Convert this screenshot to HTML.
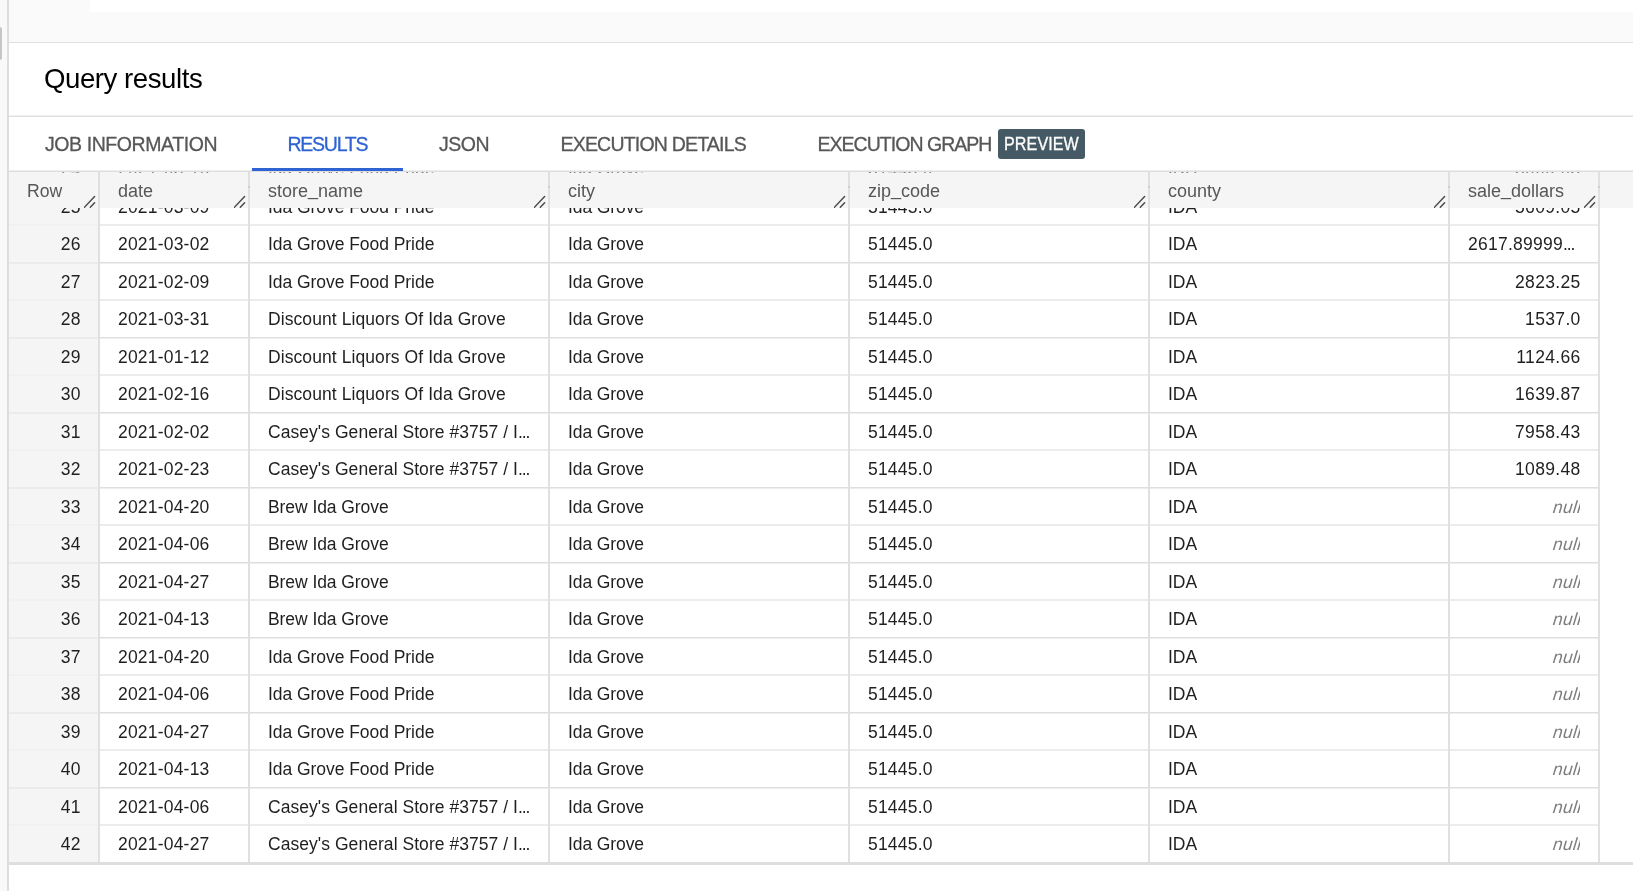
<!DOCTYPE html><html><head><meta charset="utf-8"><title>Query results</title><style>
*{box-sizing:border-box}
html,body{margin:0;padding:0}
body{width:1633px;height:891px;overflow:hidden;position:relative;background:#fff;font-family:"Liberation Sans",sans-serif;color:#202124}
.a{position:absolute}
#wrap{position:absolute;left:0;top:0;width:1633px;height:891px;will-change:transform}
.t{position:absolute;white-space:nowrap;line-height:20px;font-size:17.5px;color:#1f1f1f}
.n{letter-spacing:0.2px}
.r{text-align:right}
.tab{position:absolute;white-space:nowrap;line-height:20px;font-size:19.5px;color:#575757;top:134px;-webkit-text-stroke:0.3px currentColor}
.hd{position:absolute;white-space:nowrap;line-height:20px;font-size:18px;color:#575757;top:181px}
.vl{position:absolute;width:2px;background:#e0e0e0}
.hl{position:absolute;height:2px;background:#ebebeb}
.nul{font-style:italic;color:#7d7d7d;letter-spacing:0.3px;transform:skewX(-6deg);transform-origin:0 16px}
.rz{position:absolute;width:14px;height:14px}
.el{letter-spacing:-1.1px}
.us{position:relative;top:-2px}
</style></head><body><div id="wrap">
<div class="a" style="left:0;top:0;width:7px;height:891px;background:#f9f9f9"></div>
<div class="a" style="left:0;top:27px;width:2px;height:33px;background:#c6c6c6;border-radius:0 2px 2px 0"></div>
<div class="a" style="left:7px;top:0;width:2px;height:891px;background:#dedede"></div>
<div class="a" style="left:9px;top:0;width:1624px;height:42px;background:#fafafa"></div>
<div class="a" style="left:90px;top:0;width:1543px;height:12px;background:#fff"></div>
<div class="a" style="left:9px;top:42px;width:1624px;height:1px;background:#e0e0e0"></div>
<div class="a" style="left:44px;top:64px;font-size:27.6px;line-height:30px;color:#000;letter-spacing:-0.45px;white-space:nowrap">Query results</div>
<div class="a" style="left:9px;top:115px;width:1624px;height:1px;background:#efefef"></div>
<div class="a" style="left:9px;top:116px;width:1624px;height:1px;background:#e0e0e0"></div>
<div class="tab" style="left:45px;letter-spacing:-0.42px">JOB INFORMATION</div>
<div class="tab" style="left:287.5px;color:#2f63d3;letter-spacing:-1.25px">RESULTS</div>
<div class="tab" style="left:439px;letter-spacing:-0.45px">JSON</div>
<div class="tab" style="left:560.5px;letter-spacing:-0.8px">EXECUTION DETAILS</div>
<div class="tab" style="left:817.5px;letter-spacing:-0.97px">EXECUTION GRAPH</div>
<div class="a" style="left:998px;top:129px;width:87px;height:30px;background:#455a64;border-radius:3px"></div>
<div class="a" style="left:1004px;top:134px;font-size:17.5px;line-height:20px;color:#fff;-webkit-text-stroke:0.3px #fff;letter-spacing:0.1px;transform:scaleX(0.92);transform-origin:0 0;white-space:nowrap">PREVIEW</div>
<div class="a" style="left:9px;top:170px;width:1624px;height:1px;background:#eeeeee"></div>
<div class="a" style="left:9px;top:171px;width:1624px;height:1px;background:#dedede"></div>
<div class="a" style="left:9px;top:172px;width:1624px;height:36px;background:#f5f5f5"></div>
<div class="a" style="left:252px;top:168px;width:151px;height:3px;background:#2f63d3"></div>
<div class="a" style="left:9px;top:172px;width:89px;height:690px;background:#f5f5f5"></div>
<div class="a" style="left:0;top:172px;width:1633px;height:1px;overflow:hidden;opacity:0.55"><div class="a" style="left:0;top:-172px;width:1633px;height:891px"><div class="t r n" style="left:20px;width:60.7px;top:159.0px">24</div><div class="t n" style="left:118px;top:159.0px">2021-03-16</div><div class="t" style="left:268px;top:159.0px;letter-spacing:-0.05px">Ida Grove Food Pride</div><div class="t" style="left:568px;top:159.0px;letter-spacing:-0.1px">Ida Grove</div><div class="t n" style="left:868px;top:159.0px">51445.0</div><div class="t" style="left:1168px;top:159.0px">IDA</div><div class="t r n" style="left:1460px;width:120.7px;top:159.0px;letter-spacing:0.35px">3009.05</div></div></div>
<div class="a" style="left:0;top:208px;width:1633px;height:654px;overflow:hidden"><div class="a" style="left:0;top:-208px;width:1633px;height:891px"><div class="t r n" style="left:20px;width:60.7px;top:196.5px">25</div><div class="t n" style="left:118px;top:196.5px">2021-03-09</div><div class="t" style="left:268px;top:196.5px;letter-spacing:-0.05px">Ida Grove Food Pride</div><div class="t" style="left:568px;top:196.5px;letter-spacing:-0.1px">Ida Grove</div><div class="t n" style="left:868px;top:196.5px">51445.0</div><div class="t" style="left:1168px;top:196.5px">IDA</div><div class="t r n" style="left:1460px;width:120.7px;top:196.5px;letter-spacing:0.35px">5609.05</div><div class="t r n" style="left:20px;width:60.7px;top:234.0px">26</div><div class="t n" style="left:118px;top:234.0px">2021-03-02</div><div class="t" style="left:268px;top:234.0px;letter-spacing:-0.05px">Ida Grove Food Pride</div><div class="t" style="left:568px;top:234.0px;letter-spacing:-0.1px">Ida Grove</div><div class="t n" style="left:868px;top:234.0px">51445.0</div><div class="t" style="left:1168px;top:234.0px">IDA</div><div class="t" style="left:1468px;top:234.0px;letter-spacing:0.25px">2617.89999<span class="el">...</span></div><div class="t r n" style="left:20px;width:60.7px;top:271.5px">27</div><div class="t n" style="left:118px;top:271.5px">2021-02-09</div><div class="t" style="left:268px;top:271.5px;letter-spacing:-0.05px">Ida Grove Food Pride</div><div class="t" style="left:568px;top:271.5px;letter-spacing:-0.1px">Ida Grove</div><div class="t n" style="left:868px;top:271.5px">51445.0</div><div class="t" style="left:1168px;top:271.5px">IDA</div><div class="t r n" style="left:1460px;width:120.7px;top:271.5px;letter-spacing:0.35px">2823.25</div><div class="t r n" style="left:20px;width:60.7px;top:309.0px">28</div><div class="t n" style="left:118px;top:309.0px">2021-03-31</div><div class="t" style="left:268px;top:309.0px;letter-spacing:0.08px">Discount Liquors Of Ida Grove</div><div class="t" style="left:568px;top:309.0px;letter-spacing:-0.1px">Ida Grove</div><div class="t n" style="left:868px;top:309.0px">51445.0</div><div class="t" style="left:1168px;top:309.0px">IDA</div><div class="t r n" style="left:1460px;width:120.7px;top:309.0px;letter-spacing:0.35px">1537.0</div><div class="t r n" style="left:20px;width:60.7px;top:346.5px">29</div><div class="t n" style="left:118px;top:346.5px">2021-01-12</div><div class="t" style="left:268px;top:346.5px;letter-spacing:0.08px">Discount Liquors Of Ida Grove</div><div class="t" style="left:568px;top:346.5px;letter-spacing:-0.1px">Ida Grove</div><div class="t n" style="left:868px;top:346.5px">51445.0</div><div class="t" style="left:1168px;top:346.5px">IDA</div><div class="t r n" style="left:1460px;width:120.7px;top:346.5px;letter-spacing:0.35px">1124.66</div><div class="t r n" style="left:20px;width:60.7px;top:384.0px">30</div><div class="t n" style="left:118px;top:384.0px">2021-02-16</div><div class="t" style="left:268px;top:384.0px;letter-spacing:0.08px">Discount Liquors Of Ida Grove</div><div class="t" style="left:568px;top:384.0px;letter-spacing:-0.1px">Ida Grove</div><div class="t n" style="left:868px;top:384.0px">51445.0</div><div class="t" style="left:1168px;top:384.0px">IDA</div><div class="t r n" style="left:1460px;width:120.7px;top:384.0px;letter-spacing:0.35px">1639.87</div><div class="t r n" style="left:20px;width:60.7px;top:421.5px">31</div><div class="t n" style="left:118px;top:421.5px">2021-02-02</div><div class="t" style="left:268px;top:421.5px;letter-spacing:0.05px">Casey's General Store #3757 / I<span class="el">...</span></div><div class="t" style="left:568px;top:421.5px;letter-spacing:-0.1px">Ida Grove</div><div class="t n" style="left:868px;top:421.5px">51445.0</div><div class="t" style="left:1168px;top:421.5px">IDA</div><div class="t r n" style="left:1460px;width:120.7px;top:421.5px;letter-spacing:0.35px">7958.43</div><div class="t r n" style="left:20px;width:60.7px;top:459.0px">32</div><div class="t n" style="left:118px;top:459.0px">2021-02-23</div><div class="t" style="left:268px;top:459.0px;letter-spacing:0.05px">Casey's General Store #3757 / I<span class="el">...</span></div><div class="t" style="left:568px;top:459.0px;letter-spacing:-0.1px">Ida Grove</div><div class="t n" style="left:868px;top:459.0px">51445.0</div><div class="t" style="left:1168px;top:459.0px">IDA</div><div class="t r n" style="left:1460px;width:120.7px;top:459.0px;letter-spacing:0.35px">1089.48</div><div class="t r n" style="left:20px;width:60.7px;top:496.5px">33</div><div class="t n" style="left:118px;top:496.5px">2021-04-20</div><div class="t" style="left:268px;top:496.5px;letter-spacing:-0.07px">Brew Ida Grove</div><div class="t" style="left:568px;top:496.5px;letter-spacing:-0.1px">Ida Grove</div><div class="t n" style="left:868px;top:496.5px">51445.0</div><div class="t" style="left:1168px;top:496.5px">IDA</div><div class="a" style="left:1460px;top:496.5px;width:120px;height:22px;overflow:hidden"><div class="t r nul" style="left:0;top:0;width:121px">null</div></div><div class="t r n" style="left:20px;width:60.7px;top:534.0px">34</div><div class="t n" style="left:118px;top:534.0px">2021-04-06</div><div class="t" style="left:268px;top:534.0px;letter-spacing:-0.07px">Brew Ida Grove</div><div class="t" style="left:568px;top:534.0px;letter-spacing:-0.1px">Ida Grove</div><div class="t n" style="left:868px;top:534.0px">51445.0</div><div class="t" style="left:1168px;top:534.0px">IDA</div><div class="a" style="left:1460px;top:534.0px;width:120px;height:22px;overflow:hidden"><div class="t r nul" style="left:0;top:0;width:121px">null</div></div><div class="t r n" style="left:20px;width:60.7px;top:571.5px">35</div><div class="t n" style="left:118px;top:571.5px">2021-04-27</div><div class="t" style="left:268px;top:571.5px;letter-spacing:-0.07px">Brew Ida Grove</div><div class="t" style="left:568px;top:571.5px;letter-spacing:-0.1px">Ida Grove</div><div class="t n" style="left:868px;top:571.5px">51445.0</div><div class="t" style="left:1168px;top:571.5px">IDA</div><div class="a" style="left:1460px;top:571.5px;width:120px;height:22px;overflow:hidden"><div class="t r nul" style="left:0;top:0;width:121px">null</div></div><div class="t r n" style="left:20px;width:60.7px;top:609.0px">36</div><div class="t n" style="left:118px;top:609.0px">2021-04-13</div><div class="t" style="left:268px;top:609.0px;letter-spacing:-0.07px">Brew Ida Grove</div><div class="t" style="left:568px;top:609.0px;letter-spacing:-0.1px">Ida Grove</div><div class="t n" style="left:868px;top:609.0px">51445.0</div><div class="t" style="left:1168px;top:609.0px">IDA</div><div class="a" style="left:1460px;top:609.0px;width:120px;height:22px;overflow:hidden"><div class="t r nul" style="left:0;top:0;width:121px">null</div></div><div class="t r n" style="left:20px;width:60.7px;top:646.5px">37</div><div class="t n" style="left:118px;top:646.5px">2021-04-20</div><div class="t" style="left:268px;top:646.5px;letter-spacing:-0.05px">Ida Grove Food Pride</div><div class="t" style="left:568px;top:646.5px;letter-spacing:-0.1px">Ida Grove</div><div class="t n" style="left:868px;top:646.5px">51445.0</div><div class="t" style="left:1168px;top:646.5px">IDA</div><div class="a" style="left:1460px;top:646.5px;width:120px;height:22px;overflow:hidden"><div class="t r nul" style="left:0;top:0;width:121px">null</div></div><div class="t r n" style="left:20px;width:60.7px;top:684.0px">38</div><div class="t n" style="left:118px;top:684.0px">2021-04-06</div><div class="t" style="left:268px;top:684.0px;letter-spacing:-0.05px">Ida Grove Food Pride</div><div class="t" style="left:568px;top:684.0px;letter-spacing:-0.1px">Ida Grove</div><div class="t n" style="left:868px;top:684.0px">51445.0</div><div class="t" style="left:1168px;top:684.0px">IDA</div><div class="a" style="left:1460px;top:684.0px;width:120px;height:22px;overflow:hidden"><div class="t r nul" style="left:0;top:0;width:121px">null</div></div><div class="t r n" style="left:20px;width:60.7px;top:721.5px">39</div><div class="t n" style="left:118px;top:721.5px">2021-04-27</div><div class="t" style="left:268px;top:721.5px;letter-spacing:-0.05px">Ida Grove Food Pride</div><div class="t" style="left:568px;top:721.5px;letter-spacing:-0.1px">Ida Grove</div><div class="t n" style="left:868px;top:721.5px">51445.0</div><div class="t" style="left:1168px;top:721.5px">IDA</div><div class="a" style="left:1460px;top:721.5px;width:120px;height:22px;overflow:hidden"><div class="t r nul" style="left:0;top:0;width:121px">null</div></div><div class="t r n" style="left:20px;width:60.7px;top:759.0px">40</div><div class="t n" style="left:118px;top:759.0px">2021-04-13</div><div class="t" style="left:268px;top:759.0px;letter-spacing:-0.05px">Ida Grove Food Pride</div><div class="t" style="left:568px;top:759.0px;letter-spacing:-0.1px">Ida Grove</div><div class="t n" style="left:868px;top:759.0px">51445.0</div><div class="t" style="left:1168px;top:759.0px">IDA</div><div class="a" style="left:1460px;top:759.0px;width:120px;height:22px;overflow:hidden"><div class="t r nul" style="left:0;top:0;width:121px">null</div></div><div class="t r n" style="left:20px;width:60.7px;top:796.5px">41</div><div class="t n" style="left:118px;top:796.5px">2021-04-06</div><div class="t" style="left:268px;top:796.5px;letter-spacing:0.05px">Casey's General Store #3757 / I<span class="el">...</span></div><div class="t" style="left:568px;top:796.5px;letter-spacing:-0.1px">Ida Grove</div><div class="t n" style="left:868px;top:796.5px">51445.0</div><div class="t" style="left:1168px;top:796.5px">IDA</div><div class="a" style="left:1460px;top:796.5px;width:120px;height:22px;overflow:hidden"><div class="t r nul" style="left:0;top:0;width:121px">null</div></div><div class="t r n" style="left:20px;width:60.7px;top:834.0px">42</div><div class="t n" style="left:118px;top:834.0px">2021-04-27</div><div class="t" style="left:268px;top:834.0px;letter-spacing:0.05px">Casey's General Store #3757 / I<span class="el">...</span></div><div class="t" style="left:568px;top:834.0px;letter-spacing:-0.1px">Ida Grove</div><div class="t n" style="left:868px;top:834.0px">51445.0</div><div class="t" style="left:1168px;top:834.0px">IDA</div><div class="a" style="left:1460px;top:834.0px;width:120px;height:22px;overflow:hidden"><div class="t r nul" style="left:0;top:0;width:121px">null</div></div><div class="hl" style="left:9px;top:224.0px;width:89px;background:#f1f1f1"></div><div class="hl" style="left:100px;top:224.0px;width:1499px;background:#ececec"></div><div class="hl" style="left:9px;top:261.5px;width:89px;height:2px;background:#ebebeb"></div><div class="a" style="left:100px;top:261.5px;width:1499px;height:1px;background:#dedede"></div><div class="a" style="left:100px;top:262.5px;width:1499px;height:1px;background:#eeeeee"></div><div class="hl" style="left:9px;top:299.0px;width:89px;background:#f1f1f1"></div><div class="hl" style="left:100px;top:299.0px;width:1499px;background:#ececec"></div><div class="hl" style="left:9px;top:336.5px;width:89px;height:2px;background:#ebebeb"></div><div class="a" style="left:100px;top:336.5px;width:1499px;height:1px;background:#dedede"></div><div class="a" style="left:100px;top:337.5px;width:1499px;height:1px;background:#eeeeee"></div><div class="hl" style="left:9px;top:374.0px;width:89px;background:#f1f1f1"></div><div class="hl" style="left:100px;top:374.0px;width:1499px;background:#ececec"></div><div class="hl" style="left:9px;top:411.5px;width:89px;height:2px;background:#ebebeb"></div><div class="a" style="left:100px;top:411.5px;width:1499px;height:1px;background:#dedede"></div><div class="a" style="left:100px;top:412.5px;width:1499px;height:1px;background:#eeeeee"></div><div class="hl" style="left:9px;top:449.0px;width:89px;background:#f1f1f1"></div><div class="hl" style="left:100px;top:449.0px;width:1499px;background:#ececec"></div><div class="hl" style="left:9px;top:486.5px;width:89px;height:2px;background:#ebebeb"></div><div class="a" style="left:100px;top:486.5px;width:1499px;height:1px;background:#dedede"></div><div class="a" style="left:100px;top:487.5px;width:1499px;height:1px;background:#eeeeee"></div><div class="hl" style="left:9px;top:524.0px;width:89px;background:#f1f1f1"></div><div class="hl" style="left:100px;top:524.0px;width:1499px;background:#ececec"></div><div class="hl" style="left:9px;top:561.5px;width:89px;height:2px;background:#ebebeb"></div><div class="a" style="left:100px;top:561.5px;width:1499px;height:1px;background:#dedede"></div><div class="a" style="left:100px;top:562.5px;width:1499px;height:1px;background:#eeeeee"></div><div class="hl" style="left:9px;top:599.0px;width:89px;background:#f1f1f1"></div><div class="hl" style="left:100px;top:599.0px;width:1499px;background:#ececec"></div><div class="hl" style="left:9px;top:636.5px;width:89px;height:2px;background:#ebebeb"></div><div class="a" style="left:100px;top:636.5px;width:1499px;height:1px;background:#dedede"></div><div class="a" style="left:100px;top:637.5px;width:1499px;height:1px;background:#eeeeee"></div><div class="hl" style="left:9px;top:674.0px;width:89px;background:#f1f1f1"></div><div class="hl" style="left:100px;top:674.0px;width:1499px;background:#ececec"></div><div class="hl" style="left:9px;top:711.5px;width:89px;height:2px;background:#ebebeb"></div><div class="a" style="left:100px;top:711.5px;width:1499px;height:1px;background:#dedede"></div><div class="a" style="left:100px;top:712.5px;width:1499px;height:1px;background:#eeeeee"></div><div class="hl" style="left:9px;top:749.0px;width:89px;background:#f1f1f1"></div><div class="hl" style="left:100px;top:749.0px;width:1499px;background:#ececec"></div><div class="hl" style="left:9px;top:786.5px;width:89px;height:2px;background:#ebebeb"></div><div class="a" style="left:100px;top:786.5px;width:1499px;height:1px;background:#dedede"></div><div class="a" style="left:100px;top:787.5px;width:1499px;height:1px;background:#eeeeee"></div><div class="hl" style="left:9px;top:824.0px;width:89px;background:#f1f1f1"></div><div class="hl" style="left:100px;top:824.0px;width:1499px;background:#ececec"></div></div></div>
<div class="vl" style="left:98px;top:172px;height:690px"></div>
<div class="vl" style="left:248px;top:172px;height:690px"></div>
<div class="a" style="left:248px;top:186px;width:2px;height:2px;background:#cfcfcf"></div>
<div class="vl" style="left:548px;top:172px;height:690px"></div>
<div class="a" style="left:548px;top:186px;width:2px;height:2px;background:#cfcfcf"></div>
<div class="vl" style="left:848px;top:172px;height:690px"></div>
<div class="a" style="left:848px;top:186px;width:2px;height:2px;background:#cfcfcf"></div>
<div class="vl" style="left:1148px;top:172px;height:690px"></div>
<div class="a" style="left:1148px;top:186px;width:2px;height:2px;background:#cfcfcf"></div>
<div class="vl" style="left:1448px;top:172px;height:690px"></div>
<div class="a" style="left:1448px;top:186px;width:2px;height:2px;background:#cfcfcf"></div>
<div class="vl" style="left:1598px;top:172px;height:690px"></div>
<div class="a" style="left:1598px;top:186px;width:2px;height:2px;background:#cfcfcf"></div>
<div class="a" style="left:9px;top:862px;width:1624px;height:3px;background:#dedede"></div>
<div class="hd" style="left:27px;font-size:17.6px">Row</div>
<svg class="rz" style="left:84px;top:195px" width="14" height="14" viewBox="0 0 14 14"><path d="M0.4 12.3 L10.6 1.5 M6.3 12.3 L10.6 7.7" stroke="#4a4a4a" stroke-width="1.45" stroke-linecap="round" fill="none"/></svg>
<div class="hd" style="left:118px">date</div>
<svg class="rz" style="left:234px;top:195px" width="14" height="14" viewBox="0 0 14 14"><path d="M0.4 12.3 L10.6 1.5 M6.3 12.3 L10.6 7.7" stroke="#4a4a4a" stroke-width="1.45" stroke-linecap="round" fill="none"/></svg>
<div class="hd" style="left:268px">store<span class=us>_</span>name</div>
<svg class="rz" style="left:534px;top:195px" width="14" height="14" viewBox="0 0 14 14"><path d="M0.4 12.3 L10.6 1.5 M6.3 12.3 L10.6 7.7" stroke="#4a4a4a" stroke-width="1.45" stroke-linecap="round" fill="none"/></svg>
<div class="hd" style="left:568px">city</div>
<svg class="rz" style="left:834px;top:195px" width="14" height="14" viewBox="0 0 14 14"><path d="M0.4 12.3 L10.6 1.5 M6.3 12.3 L10.6 7.7" stroke="#4a4a4a" stroke-width="1.45" stroke-linecap="round" fill="none"/></svg>
<div class="hd" style="left:868px">zip<span class=us>_</span>code</div>
<svg class="rz" style="left:1134px;top:195px" width="14" height="14" viewBox="0 0 14 14"><path d="M0.4 12.3 L10.6 1.5 M6.3 12.3 L10.6 7.7" stroke="#4a4a4a" stroke-width="1.45" stroke-linecap="round" fill="none"/></svg>
<div class="hd" style="left:1168px">county</div>
<svg class="rz" style="left:1434px;top:195px" width="14" height="14" viewBox="0 0 14 14"><path d="M0.4 12.3 L10.6 1.5 M6.3 12.3 L10.6 7.7" stroke="#4a4a4a" stroke-width="1.45" stroke-linecap="round" fill="none"/></svg>
<div class="hd" style="left:1468px">sale<span class=us>_</span>dollars</div>
<svg class="rz" style="left:1584px;top:195px" width="14" height="14" viewBox="0 0 14 14"><path d="M0.4 12.3 L10.6 1.5 M6.3 12.3 L10.6 7.7" stroke="#4a4a4a" stroke-width="1.45" stroke-linecap="round" fill="none"/></svg>
</div></body></html>
